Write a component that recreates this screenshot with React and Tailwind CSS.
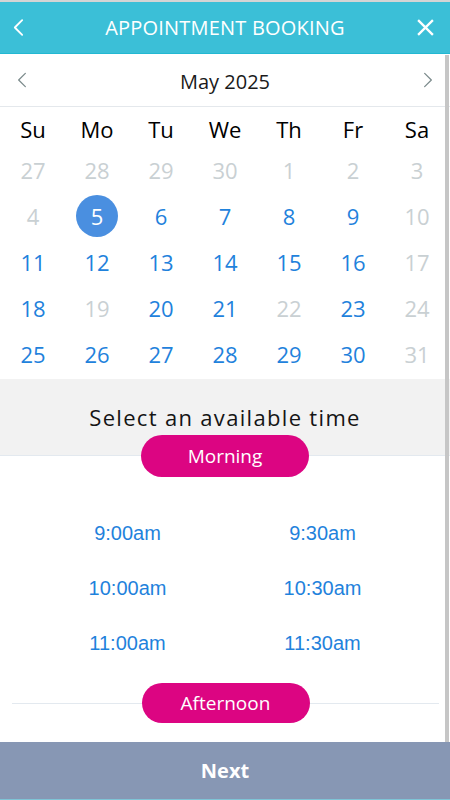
import React from "react";

const OS = { fontFamily: '"Open Sans", "Noto Sans", sans-serif' };

const weeks = [
  [["27", 0], ["28", 0], ["29", 0], ["30", 0], ["1", 0], ["2", 0], ["3", 0]],
  [["4", 0], ["5", 2], ["6", 1], ["7", 1], ["8", 1], ["9", 1], ["10", 0]],
  [["11", 1], ["12", 1], ["13", 1], ["14", 1], ["15", 1], ["16", 1], ["17", 0]],
  [["18", 1], ["19", 0], ["20", 1], ["21", 1], ["22", 0], ["23", 1], ["24", 0]],
  [["25", 1], ["26", 1], ["27", 1], ["28", 1], ["29", 1], ["30", 1], ["31", 0]],
];

const days = ["Su", "Mo", "Tu", "We", "Th", "Fr", "Sa"];
const times = [
  ["9:00am", "9:30am"],
  ["10:00am", "10:30am"],
  ["11:00am", "11:30am"],
];

function Chevron({ dir = "left", className = "", w = 1.6 }) {
  return (
    <svg viewBox="0 0 12 20" className={className} fill="none" stroke="currentColor" strokeWidth={w} strokeLinecap="round" strokeLinejoin="round">
      {dir === "left" ? <path d="M10 2 L2 10 L10 18" /> : <path d="M2 2 L10 10 L2 18" />}
    </svg>
  );
}

export default function App() {
  return (
    <div className="relative w-[450px] h-[800px] overflow-hidden bg-white flex flex-col" style={OS}>
      {/* header */}
      <div className="h-[2px] bg-[#d4d4d4] shrink-0" />
      <div className="h-[52px] bg-[#3bbfd7] border-b border-[#22b8d2] flex items-center px-[13px] shrink-0">
        <div className="w-[40px] flex items-center">
          <Chevron dir="left" className="w-[11px] h-[19px] text-white" w={2} />
        </div>
        <div className="flex-1 text-center text-white text-[20px] tracking-[0.01em]">APPOINTMENT BOOKING</div>
        <div className="w-[40px] flex justify-end">
          <svg viewBox="0 0 18 18" className="w-[17px] h-[17px] mr-[3px]" stroke="white" strokeWidth="2.4" strokeLinecap="square">
            <path d="M2 2 L16 16 M16 2 L2 16" />
          </svg>
        </div>
      </div>

      {/* month */}
      <div className="h-[53px] flex items-center justify-between px-[17px] border-b border-[#e4e8ec] shrink-0">
        <Chevron dir="left" className="w-[10px] h-[18px] text-[#7b8a8b]" w={1.5} />
        <div className="text-[20px] text-[#1a1a1a] pt-[3px]">May 2025</div>
        <Chevron dir="right" className="w-[10px] h-[18px] text-[#7b8a8b]" w={1.5} />
      </div>

      {/* calendar */}
      <div className="pl-[1px] w-[449px] shrink-0">
        <div className="grid grid-cols-[repeat(7,64px)] h-[40px] items-center pt-[4px]">
          {days.map((d) => (
            <div key={d} className="text-center text-[22px] text-black">{d}</div>
          ))}
        </div>
        {weeks.map((row, i) => (
          <div key={i} className="grid grid-cols-[repeat(7,64px)] h-[46px] items-center">
            {row.map(([n, s], j) => (
              <div key={j} className="flex justify-center items-center">
                {s === 2 ? (
                  <div className="w-[42px] h-[42px] rounded-full bg-[#4a8fe0] text-white text-[22px] flex items-center justify-center">{n}</div>
                ) : (
                  <div className={`text-[22px] ${s === 1 ? "text-[#1f82dc]" : "text-[#c9d0d3]"}`}>{n}</div>
                )}
              </div>
            ))}
          </div>
        ))}
      </div>

      {/* select time */}
      <div className="mt-[2px] h-[77px] bg-[#f2f2f2] border-b border-[#e3e9ef] flex justify-center pt-[27px] shrink-0">
        <div className="text-[22px] text-[#151515] tracking-[0.06em] leading-none">Select an available time</div>
      </div>
      <div className="relative flex justify-center -mt-[21px] shrink-0">
        <div className="w-[168px] h-[42px] rounded-full bg-[#dc0582] text-white text-[19px] flex items-center justify-center">Morning</div>
      </div>

      <div className="flex flex-col pt-[28px] pl-[30px] shrink-0" style={{ fontFamily: '"Liberation Sans", Arial, sans-serif' }}>
        {times.map((r, i) => (
          <div key={i} className="grid grid-cols-[195px_195px] h-[55px] items-center">
            <div className="text-center text-[20px] text-[#1f82dc]">{r[0]}</div>
            <div className="text-center text-[20px] text-[#1f82dc]">{r[1]}</div>
          </div>
        ))}
      </div>

      <div className="relative mt-[13px] h-[40px] flex items-center justify-center mx-[12px] w-[427px] shrink-0">
        <div className="absolute left-0 right-0 top-1/2 h-[1px] bg-[#e3e9ef]" />
        <div className="relative w-[168px] h-[40px] rounded-full bg-[#dc0582] text-white text-[19px] flex items-center justify-center">Afternoon</div>
      </div>

      <div className="flex-1" />
      <div className="h-[58px] bg-[#8797b4] border-b border-[#7fc4d6] flex items-center justify-center shrink-0">
        <div className="text-white text-[20px] font-bold">Next</div>
      </div>

      {/* scrollbar */}
      <div className="absolute right-[1px] top-[55px] h-[687px] w-[4px] bg-[#c6c6c6]" />
    </div>
  );
}
